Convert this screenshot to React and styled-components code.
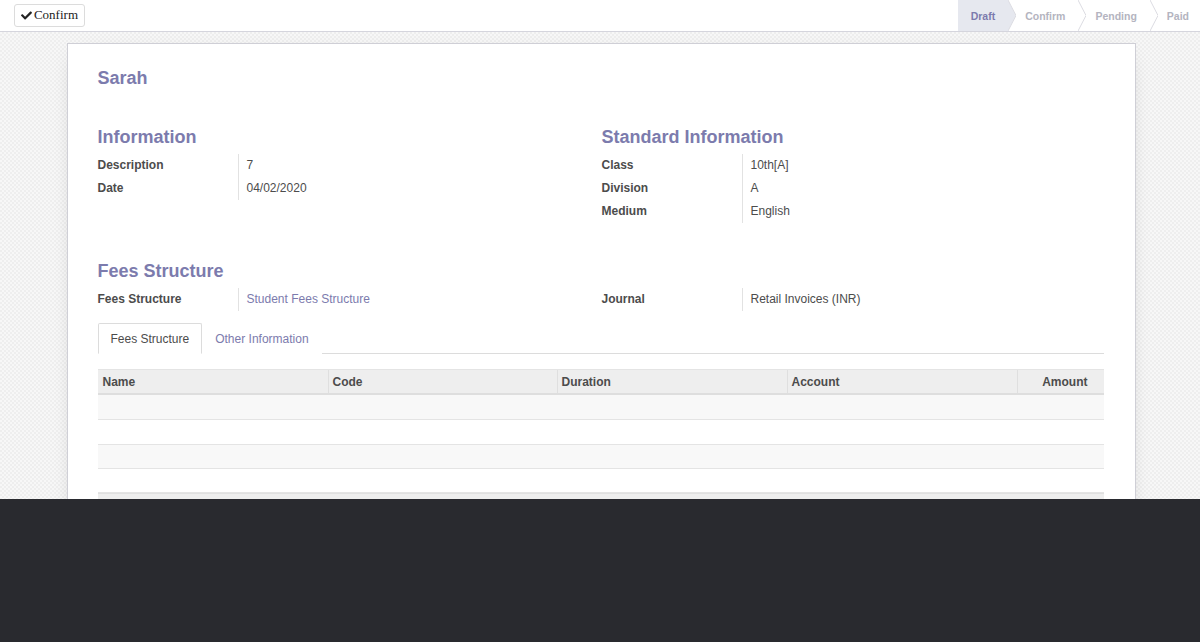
import React from "react";
import styled, { createGlobalStyle } from "styled-components";
import { FaCheck } from "react-icons/fa";

const Global = createGlobalStyle`
  html, body { margin: 0; padding: 0; background: #292a2f; }
  body { font-family: "Liberation Sans", Arial, sans-serif; }
  * { box-sizing: border-box; }
`;

const Page = styled.div`
  width: 1200px;
  height: 642px;
  display: flex;
  flex-direction: column;
  background: #292a2f;
`;

const Viewport = styled.div`
  height: 499px;
  overflow: hidden;
  display: flex;
  flex-direction: column;
  background: repeating-conic-gradient(#eeeeee 0 25%, #f7f7f7 0 50%) 0 0 / 4px 4px;
`;

const ControlPanel = styled.div`
  height: 32px;
  flex: none;
  display: flex;
  align-items: center;
  justify-content: space-between;
  background: #ffffff;
  border-bottom: 1px solid #d5d5dd;
  padding-left: 14px;
`;

const ActionButton = styled.button`
  height: 23px;
  width: 71px;
  margin-top: -1px;
  display: flex;
  align-items: center;
  justify-content: center;
  gap: 2px;
  padding: 0 6px;
  background: #fff;
  border: 1px solid #dcdcdc;
  border-radius: 3px;
  font-family: "Liberation Serif", "Times New Roman", serif;
  font-size: 13px;
  color: #222;
  svg { width: 11px; height: 11px; color: #222; }
`;

const StatusBar = styled.div`
  display: flex;
  height: 31px;
  align-self: flex-start;
`;

const Step = styled.div`
  position: relative;
  display: flex;
  align-items: center;
  height: 31px;
  padding: 0 ${(p) => (p.$last ? 11 : 13)}px 0 ${(p) => (p.$first ? 13 : 17)}px;
  font-size: 10.5px;
  font-weight: bold;
  color: ${(p) => (p.$active ? "#7c7bad" : "#b4b4c0")};
  background: ${(p) => (p.$active ? "#e6e8ef" : "transparent")};
`;

const Chevron = styled.svg`
  position: absolute;
  right: -8px;
  top: 0;
  width: 8px;
  height: 31px;
  z-index: 1;
`;

const Scroll = styled.div`
  padding-top: 11px;
  display: flex;
  justify-content: center;
`;

const Sheet = styled.div`
  width: 1069px;
  margin-left: 2px;
  background: #fff;
  border: 1px solid #cfcfd6;
  box-shadow: 0 5px 20px -12px rgba(0, 0, 0, 0.35);
  padding: 22px 31px 40px 30px;
  color: #4c4c4c;
`;

const Title = styled.h1`
  margin: 0;
  font-size: 18px;
  line-height: 24px;
  font-weight: bold;
  color: #7c7bad;
`;

const Groups = styled.div`
  display: grid;
  grid-template-columns: 504px 1fr;
  margin-top: ${(p) => p.$top}px;
`;

const Group = styled.div`
  display: flex;
  flex-direction: column;
`;

const GroupTitle = styled.h2`
  margin: 0 0 5px;
  font-size: 18px;
  line-height: 24px;
  font-weight: bold;
  color: #7c7bad;
`;

const FieldGrid = styled.div`
  display: grid;
  grid-template-columns: 140px 1fr;
`;

const Label = styled.div`
  font-size: 12px;
  font-weight: bold;
  line-height: 23px;
  color: #4c4c4c;
`;

const Value = styled.div`
  font-size: 12px;
  line-height: 23px;
  padding-left: 8px;
  border-left: 1px solid #e2e2e2;
  color: ${(p) => (p.$link ? "#7c7bad" : "#4c4c4c")};
`;

const Tabs = styled.div`
  display: flex;
  margin-top: 12px;
  border-bottom: 1px solid #dcdcdc;
  height: 31px;
`;

const Tab = styled.div`
  height: 31px;
  padding: 0 12px;
  display: flex;
  align-items: center;
  font-size: 12px;
  color: ${(p) => (p.$active ? "#4c4c4c" : "#7c7bad")};
  background: #fff;
  border: 1px solid ${(p) => (p.$active ? "#dcdcdc" : "transparent")};
  border-bottom-color: ${(p) => (p.$active ? "#fff" : "transparent")};
  border-radius: 2px 2px 0 0;
`;

const Table = styled.div`
  margin-top: 15px;
  display: flex;
  flex-direction: column;
`;

const cols = "230px 229px 230px 230px 1fr";

const HeadRow = styled.div`
  display: grid;
  grid-template-columns: ${cols};
  height: 26px;
  background: #eeeeee;
  border-top: 1px solid #e4e4e4;
  border-bottom: 2px solid #dedede;
`;

const HeadCell = styled.div`
  display: flex;
  align-items: center;
  justify-content: ${(p) => (p.$right ? "flex-end" : "flex-start")};
  padding: 0 ${(p) => (p.$right ? 16 : 4)}px 0 ${(p) => (p.$first ? 5 : 4)}px;
  font-size: 12px;
  font-weight: bold;
  color: #4c4c4c;
  border-left: ${(p) => (p.$first ? "none" : "1px solid #dfdfdf")};
`;

const BodyRow = styled.div`
  height: ${(p) => p.$h}px;
  background: ${(p) => (p.$odd ? "#f8f8f8" : "#ffffff")};
  border-bottom: 1px solid #e4e4e4;
`;

const FootRow = styled.div`
  height: 30px;
  background: #eeeeee;
  border-top: 1px solid #e0e0e0;
`;

const Dark = styled.div`
  flex: 1;
  background: #292a2f;
`;

const steps = ["Draft", "Confirm", "Pending", "Paid"];

export default function App() {
  return (
    <>
      <Global />
      <Page>
        <Viewport>
          <ControlPanel>
            <ActionButton>
              <FaCheck />
              Confirm
            </ActionButton>
            <StatusBar>
              {steps.map((s, i) => (
                <Step
                  key={s}
                  $active={i === 0}
                  $first={i === 0}
                  $last={i === steps.length - 1}
                >
                  {s}
                  {i < steps.length - 1 && (
                    <Chevron viewBox="0 0 8 31" preserveAspectRatio="none">
                      {i === 0 && <polygon points="0,0 8,15.5 0,31" fill="#e6e8ef" />}
                      <polyline
                        points="0,0 8,15.5 0,31"
                        fill="none"
                        stroke="#dcdce2"
                        strokeWidth="1"
                      />
                    </Chevron>
                  )}
                </Step>
              ))}
            </StatusBar>
          </ControlPanel>
          <Scroll>
            <Sheet>
              <Title>Sarah</Title>
              <Groups $top={35}>
                <Group>
                  <GroupTitle>Information</GroupTitle>
                  <FieldGrid>
                    <Label>Description</Label>
                    <Value>7</Value>
                    <Label>Date</Label>
                    <Value>04/02/2020</Value>
                  </FieldGrid>
                </Group>
                <Group>
                  <GroupTitle>Standard Information</GroupTitle>
                  <FieldGrid>
                    <Label>Class</Label>
                    <Value>10th[A]</Value>
                    <Label>Division</Label>
                    <Value>A</Value>
                    <Label>Medium</Label>
                    <Value>English</Value>
                  </FieldGrid>
                </Group>
              </Groups>
              <Groups $top={36}>
                <Group>
                  <GroupTitle>Fees Structure</GroupTitle>
                  <FieldGrid>
                    <Label>Fees Structure</Label>
                    <Value $link>Student Fees Structure</Value>
                  </FieldGrid>
                </Group>
                <Group>
                  <GroupTitle>&nbsp;</GroupTitle>
                  <FieldGrid>
                    <Label>Journal</Label>
                    <Value>Retail Invoices (INR)</Value>
                  </FieldGrid>
                </Group>
              </Groups>
              <Tabs>
                <Tab $active>Fees Structure</Tab>
                <Tab>Other Information</Tab>
              </Tabs>
              <Table>
                <HeadRow>
                  <HeadCell $first>Name</HeadCell>
                  <HeadCell>Code</HeadCell>
                  <HeadCell>Duration</HeadCell>
                  <HeadCell>Account</HeadCell>
                  <HeadCell $right>Amount</HeadCell>
                </HeadRow>
                <BodyRow $odd $h={25} />
                <BodyRow $h={25} />
                <BodyRow $odd $h={24} />
                <BodyRow $h={24} />
                <FootRow />
              </Table>
            </Sheet>
          </Scroll>
        </Viewport>
        <Dark />
      </Page>
    </>
  );
}
